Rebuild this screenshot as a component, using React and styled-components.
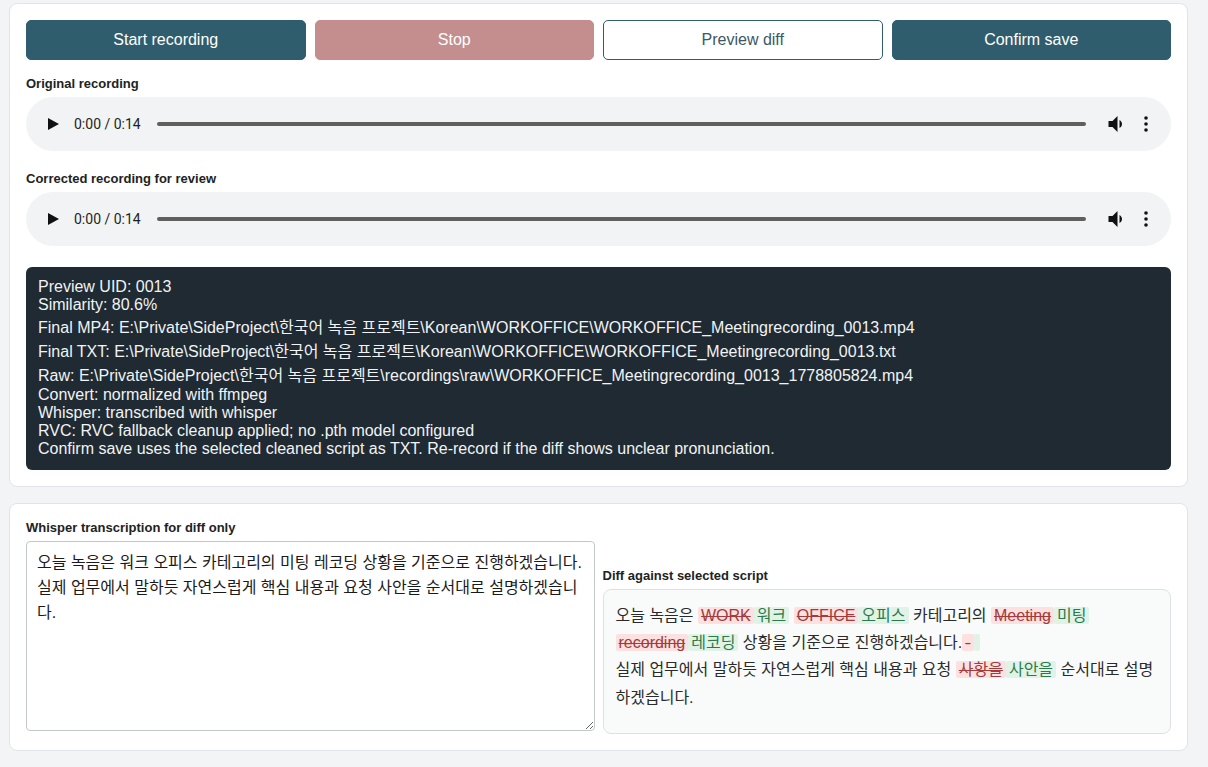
import React from 'react';
import styled, { createGlobalStyle } from 'styled-components';

const GlobalStyle = createGlobalStyle`
	html, body {
		margin: 0;
		background: #f3f4f6;
	}
	body {
		padding: 3px 20px 16px 9px;
		font-family: "Liberation Sans", Arial, "Noto Sans CJK KR", sans-serif;
		color: #1f2328;
	}
`;

const Card = styled.section`
	background: #fff;
	border: 1px solid #e1e4e8;
	border-radius: 8px;
	padding: 16px;
	& + & {
		margin-top: 16px;
	}
`;

const ButtonRow = styled.div`
	display: grid;
	grid-template-columns: repeat(4, 1fr);
	gap: 9px;
`;

const Button = styled.button`
	height: 40px;
	border-radius: 5px;
	font-family: "Liberation Sans", Arial, sans-serif;
	font-size: 16px;
	cursor: pointer;
	border: 1px solid ${p => (p.$variant === 'danger' ? '#c48e8e' : '#2f5d6d')};
	background: ${p =>
		p.$variant === 'danger' ? '#c48e8e' : p.$variant === 'outline' ? '#fff' : '#2f5d6d'};
	color: ${p => (p.$variant === 'outline' ? '#3c5965' : '#fff')};
	&:disabled {
		cursor: default;
	}
`;

const Field = styled.div`
	margin-top: ${p => p.$top || 0}px;
`;

const Label = styled.div`
	font-size: 13px;
	line-height: 15px;
	font-weight: bold;
	color: #222;
	margin-bottom: 6px;
`;

const Player = styled.div`
	height: 54px;
	border-radius: 27px;
	background: #f1f3f4;
	display: flex;
	align-items: center;
	padding: 0 23px 0 20px;
`;

const PlayIcon = styled.span`
	width: 0;
	height: 0;
	border-top: 6px solid transparent;
	border-bottom: 6px solid transparent;
	border-left: 11px solid #111;
	margin-left: 2px;
	margin-right: 15px;
`;

const Time = styled.span`
	font-family: Roboto, "Liberation Sans", sans-serif;
	font-size: 14px;
	color: #1f1f1f;
	margin-right: 16px;
	white-space: nowrap;
`;

const Track = styled.div`
	flex: 1;
	height: 4px;
	border-radius: 2px;
	background: #5f5f5f;
	margin-right: 20px;
`;

const IconBox = styled.span`
	display: flex;
	align-items: center;
	margin-right: ${p => p.$gap || 0}px;
`;

const Console = styled.pre`
	margin: 21px 0 0;
	background: #1f2a32;
	color: #f1f3f5;
	border-radius: 6px;
	padding: 11px 12px 12px;
	font-family: "Liberation Sans", Arial, "Noto Sans CJK KR", sans-serif;
	font-size: 16px;
	line-height: normal;
	white-space: pre-wrap;
`;

const Columns = styled.div`
	display: grid;
	grid-template-columns: 1fr 1fr;
	gap: 8px;
	align-items: end;
`;

const TextArea = styled.textarea`
	box-sizing: border-box;
	display: block;
	width: 100%;
	height: 190px;
	margin: 0 0 3px;
	padding: 8px 10px;
	border: 1px solid #c3c7cc;
	border-radius: 4px;
	font-family: "Liberation Sans", Arial, "Noto Sans CJK KR", sans-serif;
	font-size: 16px;
	line-height: 25px;
	color: #1a1a1a;
	resize: vertical;
`;

const DiffBox = styled.div`
	border: 1px solid #dde1e5;
	border-radius: 8px;
	background: #f9fbfa;
	padding: 12px 12px 22px;
	font-family: "Liberation Sans", Arial, "Noto Sans CJK KR", sans-serif;
	font-size: 16px;
	line-height: 27.3px;
	color: #2a2a2a;
`;

const Del = styled.del`
	background: #fde1e1;
	color: #a23b3b;
	padding: 0 3px;
	border-radius: 2px;
`;

const Ins = styled.ins`
	background: #e1f3e7;
	color: #2c7a4b;
	text-decoration: none;
	padding: 0 3px;
	border-radius: 2px;
`;

const VolumeIcon = () => (
	<svg width="18" height="20" viewBox="4 2 15 20">
		<path d="M18.5 12c0-1.77-1.02-3.29-2.5-4.03v8.05c1.48-.73 2.5-2.25 2.5-4.02zM5 9v6h4l5 5V4L9 9H5z" fill="#111" />
	</svg>
);

const MoreIcon = () => (
	<svg width="4" height="16" viewBox="0 0 4 16">
		<circle cx="2" cy="2" r="1.8" fill="#111" />
		<circle cx="2" cy="8" r="1.8" fill="#111" />
		<circle cx="2" cy="14" r="1.8" fill="#111" />
	</svg>
);

const AudioPlayer = () => (
	<Player>
		<PlayIcon />
		<Time>0:00 / 0:14</Time>
		<Track />
		<IconBox $gap={20}><VolumeIcon /></IconBox>
		<IconBox><MoreIcon /></IconBox>
	</Player>
);

const logText = `Preview UID: 0013
Similarity: 80.6%
Final MP4: E:\\Private\\SideProject\\한국어 녹음 프로젝트\\Korean\\WORKOFFICE\\WORKOFFICE_Meetingrecording_0013.mp4
Final TXT: E:\\Private\\SideProject\\한국어 녹음 프로젝트\\Korean\\WORKOFFICE\\WORKOFFICE_Meetingrecording_0013.txt
Raw: E:\\Private\\SideProject\\한국어 녹음 프로젝트\\recordings\\raw\\WORKOFFICE_Meetingrecording_0013_1778805824.mp4
Convert: normalized with ffmpeg
Whisper: transcribed with whisper
RVC: RVC fallback cleanup applied; no .pth model configured
Confirm save uses the selected cleaned script as TXT. Re-record if the diff shows unclear pronunciation.`;

const transcript =
	'오늘 녹음은 워크 오피스 카테고리의 미팅 레코딩 상황을 기준으로 진행하겠습니다.\n실제 업무에서 말하듯 자연스럽게 핵심 내용과 요청 사안을 순서대로 설명하겠습니다.';

const App = () => (
	<>
		<GlobalStyle />
		<Card>
			<ButtonRow>
				<Button>Start recording</Button>
				<Button $variant="danger" disabled>Stop</Button>
				<Button $variant="outline">Preview diff</Button>
				<Button>Confirm save</Button>
			</ButtonRow>
			<Field $top={16}>
				<Label>Original recording</Label>
				<AudioPlayer />
			</Field>
			<Field $top={20}>
				<Label>Corrected recording for review</Label>
				<AudioPlayer />
			</Field>
			<Console>{logText}</Console>
		</Card>
		<Card>
			<Columns>
				<Field>
					<Label>Whisper transcription for diff only</Label>
					<TextArea defaultValue={transcript} />
				</Field>
				<Field>
					<Label>Diff against selected script</Label>
					<DiffBox>
						오늘 녹음은 <Del>WORK</Del><Ins>워크</Ins> <Del>OFFICE</Del><Ins>오피스</Ins> 카테고리의{' '}
						<Del>Meeting</Del><Ins>미팅</Ins> <Del>recording</Del><Ins>레코딩</Ins> 상황을 기준으로
						진행하겠습니다.<Del>-</Del><Ins> </Ins>
						<br />
						실제 업무에서 말하듯 자연스럽게 핵심 내용과 요청 <Del>사항을</Del><Ins>사안을</Ins> 순서대로
						설명하겠습니다.
					</DiffBox>
				</Field>
			</Columns>
		</Card>
	</>
);

export default App;
